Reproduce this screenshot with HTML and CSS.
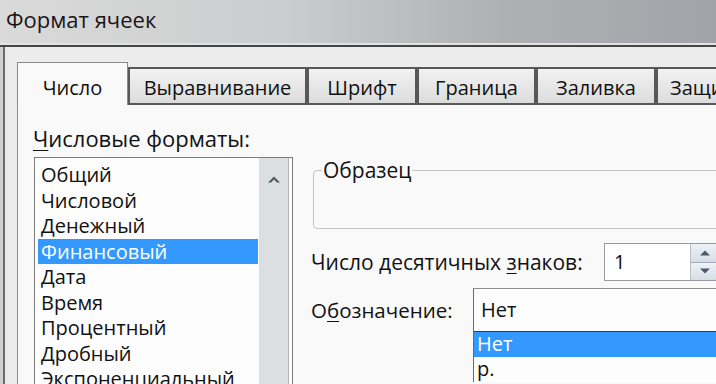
FILE: index.html
```html
<!DOCTYPE html>
<html lang="ru">
<head>
  <meta charset="UTF-8" />
  <title>Формат ячеек</title>
  <link rel="stylesheet" href="styles.css">
</head>
<body>
  <!-- заголовок окна -->
  <div class="titlebar"><span class="title">Формат ячеек</span></div>

  <div class="window">
    <!-- вкладки -->
    <div class="tabs">
      <div class="tab active">Число</div>
      <div class="tab t-align">Выравнивание</div>
      <div class="tab t-font">Шрифт</div>
      <div class="tab t-border">Граница</div>
      <div class="tab t-fill">Заливка</div>
      <div class="tab t-protect">Защита</div>
    </div>

    <div class="panel">
      <!-- список форматов -->
      <div class="formats">
        <div class="label"><u>Ч</u>исловые форматы:</div>
        <div class="listbox">
          <ul class="items">
            <li>Общий</li>
            <li>Числовой</li>
            <li>Денежный</li>
            <li class="selected">Финансовый</li>
            <li>Дата</li>
            <li>Время</li>
            <li>Процентный</li>
            <li>Дробный</li>
            <li>Экспоненциальный</li>
          </ul>
          <div class="scrollbar">
            <svg class="arrow" width="12" height="7" viewBox="0 0 12 7"><polygon points="0,6.5 6,0.5 12,6.5 9,6.5 6,3.5 3,6.5" fill="#555"/></svg>
          </div>
        </div>
      </div>

      <!-- параметры -->
      <div class="details">
        <fieldset class="sample"><legend>Образец</legend></fieldset>

        <div class="row">
          <span>Число десятичных <u>з</u>наков:</span>
          <div class="spin">
            <span class="spin-value">1</span>
            <div class="spin-btns">
              <div class="spin-btn"><svg width="10" height="6" viewBox="0 0 10 6"><polygon points="0,5.5 5,0.5 10,5.5" fill="#4d5a6b"/></svg></div>
              <div class="spin-btn"><svg width="10" height="6" viewBox="0 0 10 6"><polygon points="0,0.5 5,5.5 10,0.5" fill="#4d5a6b"/></svg></div>
            </div>
          </div>
        </div>

        <div class="row">
          <span class="symbol-label">О<u>б</u>означение:</span>
          <div class="combo">
            <div class="combo-value">Нет</div>
            <ul class="dropdown">
              <li class="selected">Нет</li>
              <li>р.</li>
            </ul>
          </div>
        </div>
      </div>
    </div>
  </div>
</body>
</html>
```

FILE: styles.css
```css
/* сброс */
* { margin: 0; padding: 0; box-sizing: border-box; }
html, body { width: 716px; height: 384px; overflow: hidden; }
body {
  background: #cfd0d1;
  font-family: "Open Sans", "DejaVu Sans", sans-serif;
  font-size: 20px;
  color: #111;
}
ul { list-style: none; }
u { text-decoration-thickness: 1px; text-underline-offset: 3px; }

/* заголовок */
.titlebar {
  height: 47px;
  padding-left: 6px;
  background: linear-gradient(90deg, #dadada 0%, #cbcccd 40%, #aeb1b4 70%, #a0a4a8 100%);
  border-bottom: 2px solid #454545;
  box-shadow: inset 0 -2px 0 #e2e2e2;
}
.title { font-size: 22px; line-height: 38px; color: #1a1416; }

/* окно */
.window {
  margin-left: 3px;
  height: 337px;
  border-left: 2px solid #6b6b6b;
  background: #ececec;
  padding: 15px 0 0 12px;
}

/* вкладки */
.tabs { display: flex; align-items: flex-end; height: 43px; white-space: nowrap; }
.tab {
  flex: none;
  height: 38px;
  line-height: 38px;
  text-align: center;
  border: 2px solid #585858;
  background: linear-gradient(#f2f2f2, #dcdcdc);
}
.tab.active {
  width: 111px;
  height: 43px;
  line-height: 49px;
  border: 1px solid #8a8a8a;
  border-bottom: none;
  background: #f9f9f9;
}
.t-align { width: 179px; }
.t-font { width: 110px; }
.t-border { width: 119px; }
.t-fill { width: 120px; }
.t-protect { width: 80px; text-align: left; padding-left: 12px; }

/* панель */
.panel {
  display: flex;
  height: 280px;
  overflow: hidden;
  border-left: 1px solid #8c8c8c;
  background: #f9f9f9;
  padding-left: 15px;
}

.formats { flex: none; width: 260px; }
.label { font-size: 22px; line-height: 24px; margin-top: 21px; }
.listbox {
  display: flex;
  height: 240px;
  margin-top: 7px;
  margin-left: 1px;
  border: 1px solid #7c7c7c;
  border-bottom: none;
  background: #fdfdfd;
}
.items { flex: 1; padding: 4px 0 0 3px; }
.items li { height: 25.5px; line-height: 25px; padding-left: 3px; }
.selected { background: #3399ff; color: #fff; }
.scrollbar {
  flex: none;
  width: 30px;
  margin: 0 3px 0 1px;
  border-right: 1px solid #b5b5b5;
  background: #dcdfe2;
  padding-top: 18px;
}
.arrow { display: block; margin: 0 auto; }

.details { flex: none; width: 409px; margin-left: 18px; }
.sample {
  height: 70px;
  margin: 54px 0 0 2px;
  border: 1px solid #c4c4c4;
  border-radius: 4px;
  padding: 0 8px;
}
.sample legend { padding: 0 1px; line-height: 22px; font-size: 21px; }

.row { display: flex; align-items: center; font-size: 21px; }
.row:nth-of-type(1) { margin-top: 14px; }

.spin {
  display: flex;
  width: 116px;
  height: 38px;
  margin-left: auto;
  border: 1px solid #9a9a9a;
  background: #fff;
  font-size: 20px;
}
.spin-value { flex: 1; padding-left: 9px; line-height: 36px; }
.spin-btns { display: flex; flex-direction: column; width: 29px; border-left: 1px solid #b9bec5; }
.spin-btn {
  flex: 1;
  display: flex; align-items: center; justify-content: center;
  background: linear-gradient(#eef2f6, #d5dde6);
}
.spin-btn + .spin-btn { border-top: 1px solid #a3acb7; }

.row + .row { margin-top: 7px; align-items: flex-start; }
.symbol-label { margin-top: 8px; font-size: 20.5px; }
.combo {
  width: 247px;
  margin-left: auto;
  border-left: 1px solid #6a6a6a;
  border-top: 1px solid #8e8e8e;
  background: #fdfdfd;
  font-size: 20px;
}
.combo-value { height: 42px; line-height: 42px; padding-left: 7px; }
.dropdown { border-top: 1px solid #3a3a3a; }
.dropdown li { height: 25px; line-height: 24px; padding-left: 3px; }
```
